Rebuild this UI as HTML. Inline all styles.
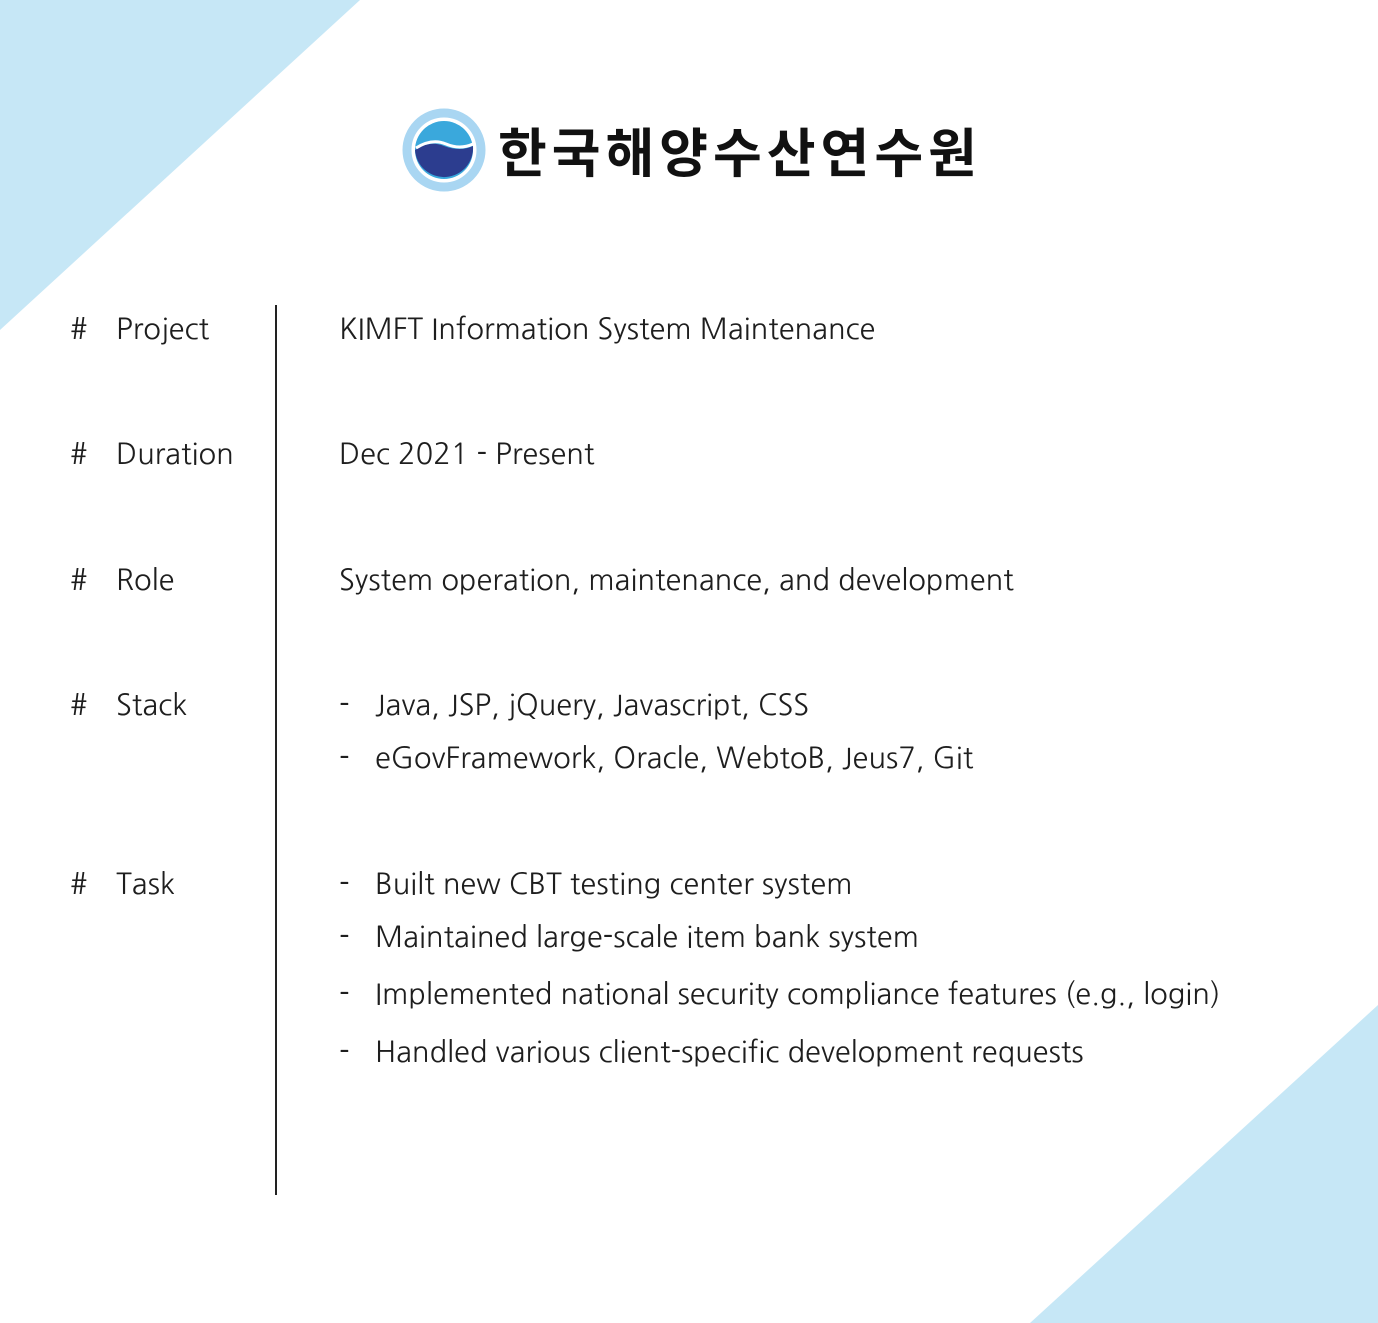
<!DOCTYPE html>
<html><head><meta charset="utf-8"><style>
body{margin:0;width:1378px;height:1323px;position:relative;overflow:hidden;background:#fff;font-family:"NanumGothic","Liberation Sans",sans-serif;color:#1e1e1e}
.t{position:absolute;font-size:29px;line-height:32px;white-space:nowrap}
</style></head><body>
<svg width="1378" height="1323" style="position:absolute;left:0;top:0">
<polygon points="0,0 360,0 0,330" fill="#c6e7f6"/>
<polygon points="1378,1005 1378,1323 1030,1323" fill="#c6e7f6"/>
<rect x="275" y="305" width="2" height="890" fill="#222"/>
<circle cx="444" cy="150" r="37" fill="none" stroke="#a9d6f2" stroke-width="9"/>
<circle cx="444" cy="150" r="29" fill="#3aa8dc"/>
<path d="M415,150 Q430,140 444,146 Q460,152 473,146 A29,29 0 0 1 415,150Z" fill="#2c3d8f"/>
<path d="M416,148 Q432,138 446,144 Q460,150 473,144" stroke="#fff" stroke-width="3" fill="none"/>
</svg>
<div class="t" style="left:498px;top:118px;font-size:53px;line-height:64px;font-weight:bold;font-family:'Noto Sans CJK KR','NanumGothic',sans-serif;color:#111;letter-spacing:5px">한국해양수산연수원</div>
<div class="t" style="left:70px;top:314px">#</div><div class="t" style="left:116px;top:314px">Project</div>
<div class="t" style="left:339px;top:314px">KIMFT Information System Maintenance</div>
<div class="t" style="left:70px;top:439px">#</div><div class="t" style="left:116px;top:439px">Duration</div>
<div class="t" style="left:339px;top:439px">Dec 2021 - Present</div>
<div class="t" style="left:70px;top:565px">#</div><div class="t" style="left:116px;top:565px">Role</div>
<div class="t" style="left:339px;top:565px">System operation, maintenance, and development</div>
<div class="t" style="left:70px;top:690px">#</div><div class="t" style="left:116px;top:690px">Stack</div>
<div class="t" style="left:339px;top:690px">-</div><div class="t" style="left:375px;top:690px">Java, JSP, jQuery, Javascript, CSS</div>
<div class="t" style="left:339px;top:743px">-</div><div class="t" style="left:375px;top:743px">eGovFramework, Oracle, WebtoB, Jeus7, Git</div>
<div class="t" style="left:70px;top:869px">#</div><div class="t" style="left:116px;top:869px">Task</div>
<div class="t" style="left:339px;top:869px">-</div><div class="t" style="left:375px;top:869px">Built new CBT testing center system</div>
<div class="t" style="left:339px;top:922px">-</div><div class="t" style="left:375px;top:922px">Maintained large-scale item bank system</div>
<div class="t" style="left:339px;top:979px">-</div><div class="t" style="left:375px;top:979px">Implemented national security compliance features (e.g., login)</div>
<div class="t" style="left:339px;top:1037px">-</div><div class="t" style="left:375px;top:1037px">Handled various client-specific development requests</div>
</body></html>
